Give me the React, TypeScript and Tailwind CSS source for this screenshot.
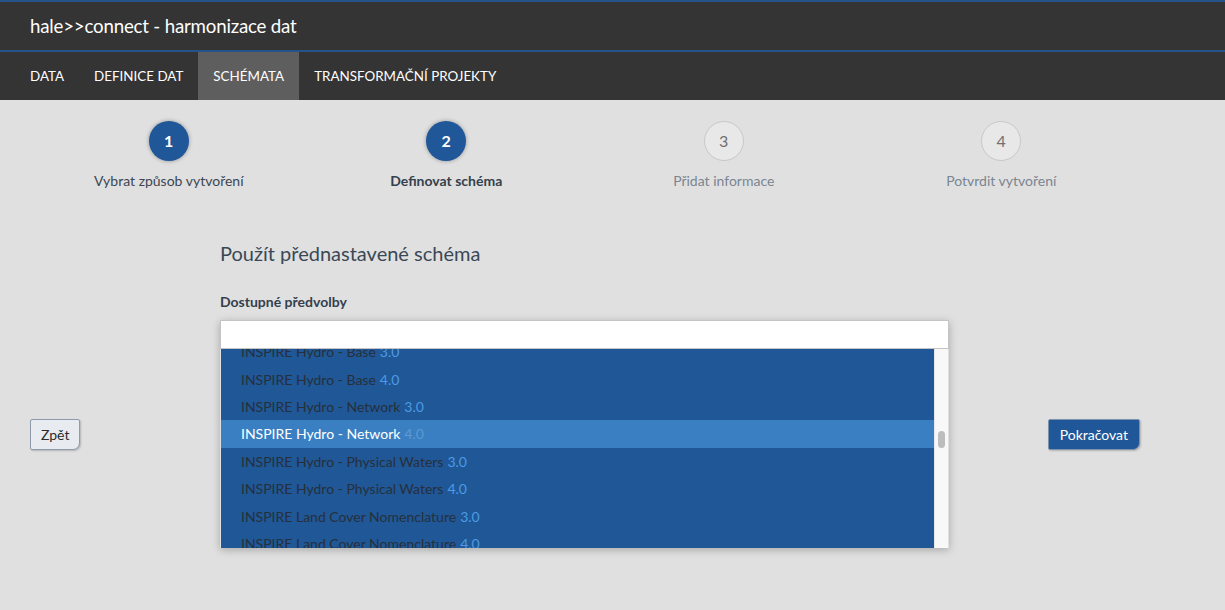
import React from "react";

const font = { fontFamily: "Lato, 'Open Sans', sans-serif" };

const steps = [
  { n: 1, label: "Vybrat způsob vytvoření", done: true, current: false },
  { n: 2, label: "Definovat schéma", done: true, current: true },
  { n: 3, label: "Přidat informace", done: false, current: false },
  { n: 4, label: "Potvrdit vytvoření", done: false, current: false },
];

const presets = [
  { name: "INSPIRE Hydro - Base", v: "3.0" },
  { name: "INSPIRE Hydro - Base", v: "4.0" },
  { name: "INSPIRE Hydro - Network", v: "3.0" },
  { name: "INSPIRE Hydro - Network", v: "4.0", selected: true },
  { name: "INSPIRE Hydro - Physical Waters", v: "3.0" },
  { name: "INSPIRE Hydro - Physical Waters", v: "4.0" },
  { name: "INSPIRE Land Cover Nomenclature", v: "3.0" },
  { name: "INSPIRE Land Cover Nomenclature", v: "4.0" },
];

export default function App() {
  return (
    <div className="min-h-[610px] bg-[#e0e0e0]" style={font}>
      <header className="bg-[#343434]">
        <div className="h-[50px] border-t-2 border-[#25528a] flex items-center px-[30px]">
          <span className="text-[18.7px] text-white leading-none tracking-[-0.2px]">hale&gt;&gt;connect - harmonizace dat</span>
        </div>
        <nav className="h-[50px] border-t-2 border-[#25528a] flex items-stretch px-[15px] text-[13.4px] text-white uppercase">
          {["Data", "Definice dat", "Schémata", "Transformační projekty"].map((t) => (
            <a
              key={t}
              className={`flex items-center px-[15px] ${t === "Schémata" ? "bg-[#5e5e5e]" : ""}`}
            >
              {t}
            </a>
          ))}
        </nav>
      </header>

      <div className="px-[30px] w-[1170px]">
        <div className="grid grid-cols-4 pt-[21px]">
          {steps.map((s) => (
            <div key={s.n} className="flex flex-col items-center">
              <div
                className={`w-[40px] h-[40px] rounded-full flex items-center justify-center text-[16px] ${
                  s.done
                    ? "bg-[#1f5799] text-white font-bold shadow-[0_0_4px_rgba(0,0,0,0.35)]"
                    : "bg-[#e8e8e8] border border-[#c8c8c8] text-[#707070]"
                }`}
              >
                {s.n}
              </div>
              <div
                className={`mt-[9px] text-[14px] ${
                  s.current ? "font-bold text-[#34404d]" : s.done ? "text-[#3d4650]" : "text-[#7a8591]"
                }`}
              >
                {s.label}
              </div>
            </div>
          ))}
        </div>

        <div className="flex mt-[50px]">
          <div className="w-[190px] pt-[178px]">
            <button className="h-[31px] px-[10px] text-[14px] text-[#2b2b2b] bg-[#e8ebef] border border-[#8d9bab] rounded-[2px] rounded-br-[7px] shadow-[1px_1px_2px_rgba(0,0,0,0.2)]">
              Zpět
            </button>
          </div>

          <div className="w-[729px]">
            <h2 className="text-[20px] text-[#3a4856] leading-[24px]">Použít přednastavené schéma</h2>
            <div className="mt-[26px] text-[14px] font-bold text-[#34404d]">Dostupné předvolby</div>
            <div className="mt-[8px] shadow-[0_2px_8px_rgba(0,0,0,0.25)]">
              <div className="h-[29px] bg-white border border-[#c4c4c4]" />
              <div className="flex h-[199px] mx-px">
                <div className="flex-1 bg-[#1f5797] overflow-hidden text-[14px]">
                  {presets.map((p, i) => (
                    <div
                      key={i}
                      className={`h-[27.4px] flex items-center pl-[20px] ${i === 0 ? "-mt-[11px]" : ""} ${
                        p.selected ? "bg-[#3a7fc1] text-white" : "text-[#26303b]"
                      }`}
                    >
                      <span>{p.name}</span>
                      <span className={`ml-[4px] ${p.selected ? "text-[#5d9ad2]" : "text-[#4c9be4]"}`}>{p.v}</span>
                    </div>
                  ))}
                </div>
                <div className="w-[14px] bg-[#f8f8f8] border-l border-[#e6e6e6] pt-[82px] flex justify-center">
                  <div className="w-[7px] h-[17px] rounded-full bg-[#bdbdbd]" />
                </div>
              </div>
            </div>
          </div>

          <div className="flex-1 flex justify-end pt-[178px]">
            <button className="h-[31px] px-[11px] text-[14px] text-white bg-[#1f5799] border border-[#7d93ad] rounded-[2px] rounded-br-[7px] shadow-[1px_1px_2px_rgba(0,0,0,0.2)]">
              Pokračovat
            </button>
          </div>
        </div>
      </div>
    </div>
  );
}
